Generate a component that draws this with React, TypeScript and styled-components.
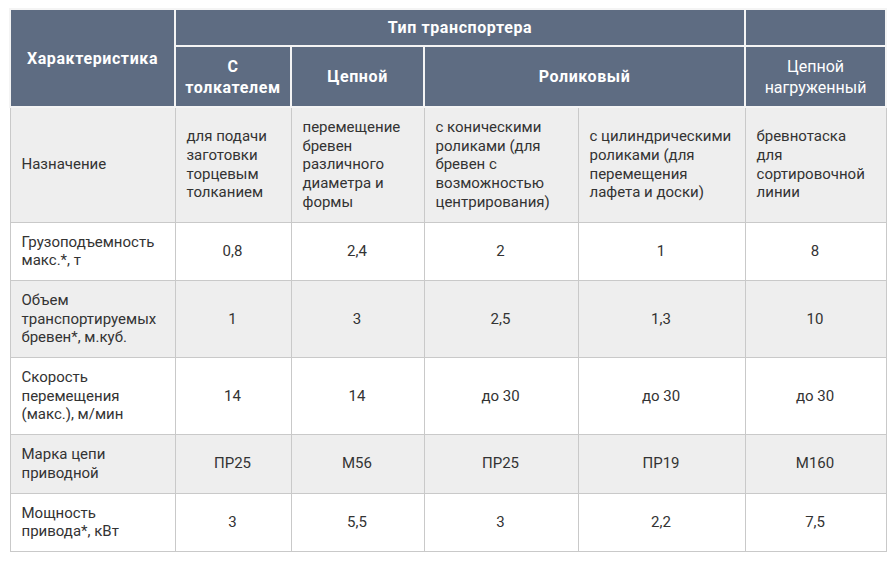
import React from "react";
import styled, { createGlobalStyle } from "styled-components";

const Global = createGlobalStyle`
  html, body { margin: 0; padding: 0; background: #ffffff; }
  body { font-family: Roboto, "Noto Sans", Arial, sans-serif; }
`;

const Page = styled.div`
  padding: 8px 0 0 9px;
`;

const Table = styled.table`
  border-collapse: collapse;
  table-layout: fixed;
  width: 876px;
  color: #333333;
  font-size: 15px;
  line-height: 18.7px;
`;

const Head = styled.th<{ $light?: boolean; $h?: number }>`
  background: #5e6c82;
  color: #ffffff;
  border: 2px solid #f4f4f4;
  font-weight: ${(p) => (p.$light ? 400 : 700)};
  letter-spacing: ${(p) => (p.$light ? "0" : "0.6px")};
  font-size: 16px;
  line-height: 21px;
  padding: 5px 6px;
  text-align: center;
  vertical-align: middle;
  height: ${(p) => (p.$h ? `${p.$h}px` : "auto")};
  box-sizing: border-box;
`;

const Row = styled.tr<{ $shade?: boolean }>`
  background: ${(p) => (p.$shade ? "#eeeeee" : "#ffffff")};
`;

const Cell = styled.td<{ $center?: boolean }>`
  border: 1px solid #c9c9c9;
  padding: 10px 12px 10px 11px;
  text-align: ${(p) => (p.$center ? "center" : "left")};
  vertical-align: middle;
`;

type RowData = { label: string; values: string[]; shade: boolean; center: boolean };

const rows: RowData[] = [
  {
    label: "Назначение",
    values: [
      "для подачи заготовки торцевым толканием",
      "перемещение бревен различного диаметра и формы",
      "с коническими роликами (для бревен с возможностью центрирования)",
      "с цилиндрическими роликами (для перемещения лафета и доски)",
      "бревнотаска для сортировочной линии",
    ],
    shade: true,
    center: false,
  },
  { label: "Грузоподъемность макс.*, т", values: ["0,8", "2,4", "2", "1", "8"], shade: false, center: true },
  { label: "Объем транспортируемых бревен*, м.куб.", values: ["1", "3", "2,5", "1,3", "10"], shade: true, center: true },
  { label: "Скорость перемещения (макс.), м/мин", values: ["14", "14", "до 30", "до 30", "до 30"], shade: false, center: true },
  { label: "Марка цепи приводной", values: ["ПР25", "М56", "ПР25", "ПР19", "М160"], shade: true, center: true },
  { label: "Мощность привода*, кВт", values: ["3", "5,5", "3", "2,2", "7,5"], shade: false, center: true },
];

const widths = [165, 116, 133, 154, 167, 141];

export default function App() {
  return (
    <>
      <Global />
      <Page>
        <Table>
          <colgroup>
            {widths.map((w, i) => (
              <col key={i} style={{ width: w }} />
            ))}
          </colgroup>
          <thead>
            <tr>
              <Head rowSpan={2}>Характеристика</Head>
              <Head colSpan={4} $h={37}>Тип транспортера</Head>
              <Head $h={37}></Head>
            </tr>
            <tr>
              <Head $h={61}>
                С<br />толкателем
              </Head>
              <Head $h={61}>Цепной</Head>
              <Head colSpan={2} $h={61}>Роликовый</Head>
              <Head $light $h={61}>
                Цепной<br />нагруженный
              </Head>
            </tr>
          </thead>
          <tbody>
            {rows.map((r) => (
              <Row key={r.label} $shade={r.shade}>
                <Cell>{r.label}</Cell>
                {r.values.map((v, i) => (
                  <Cell key={i} $center={r.center}>
                    {v}
                  </Cell>
                ))}
              </Row>
            ))}
          </tbody>
        </Table>
      </Page>
    </>
  );
}
